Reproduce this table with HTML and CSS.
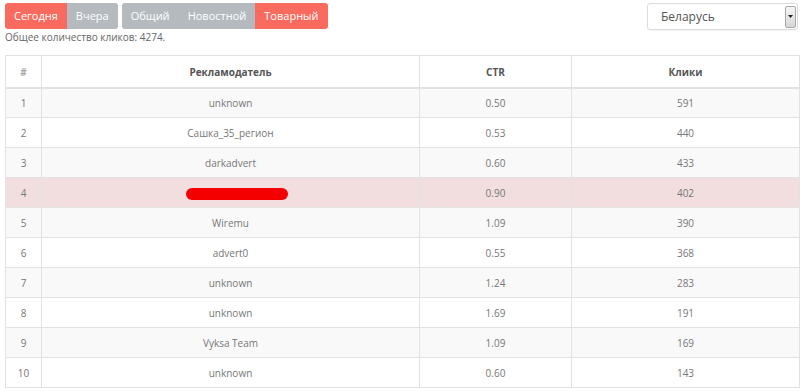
FILE: index.html
```html
<!DOCTYPE html>
<html>
<head>
<meta charset="utf-8">
<link rel="stylesheet" href="styles.css">
</head>
<body>
<div class="page">
  <div class="topbar">
    <div class="left">
      <div class="groups">
        <div class="group">
          <span class="btn active">Сегодня</span><span class="btn">Вчера</span>
        </div>
        <div class="group">
          <span class="btn">Общий</span><span class="btn">Новостной</span><span class="btn active">Товарный</span>
        </div>
      </div>
      <div class="total">Общее количество кликов: 4274.</div>
    </div>
    <div class="select">
      <span class="select-text">Беларусь</span>
      <span class="select-arrow"><svg width="5" height="3" viewBox="0 0 5 3"><path d="M0 0H5L2.5 3Z" fill="#222"/></svg></span>
    </div>
  </div>
  <table class="stats">
    <colgroup>
      <col class="c-num"><col class="c-adv"><col class="c-ctr"><col class="c-clicks">
    </colgroup>
    <thead>
      <tr><th class="hash">#</th><th>Рекламодатель</th><th>CTR</th><th>Клики</th></tr>
    </thead>
    <tbody>
      <tr><td>1</td><td>unknown</td><td>0.50</td><td>591</td></tr>
      <tr><td>2</td><td>Сашка_35_регион</td><td>0.53</td><td>440</td></tr>
      <tr><td>3</td><td>darkadvert</td><td>0.60</td><td>433</td></tr>
      <tr class="danger"><td>4</td><td><span class="redact"></span></td><td>0.90</td><td>402</td></tr>
      <tr><td>5</td><td>Wiremu</td><td>1.09</td><td>390</td></tr>
      <tr><td>6</td><td>advert0</td><td>0.55</td><td>368</td></tr>
      <tr><td>7</td><td>unknown</td><td>1.24</td><td>283</td></tr>
      <tr><td>8</td><td>unknown</td><td>1.69</td><td>191</td></tr>
      <tr><td>9</td><td>Vyksa Team</td><td>1.09</td><td>169</td></tr>
      <tr><td>10</td><td>unknown</td><td>0.60</td><td>143</td></tr>
    </tbody>
  </table>
</div>
</body>
</html>
```

FILE: styles.css
```css
* { box-sizing: border-box; }
html, body { margin: 0; padding: 0; background: #fff; }
body {
  font-family: "Open Sans", "Liberation Sans", sans-serif;
  color: #777;
}
.page { padding: 3px 8px 0 5px; }
.topbar {
  display: flex;
  justify-content: space-between;
  align-items: flex-start;
}
.groups { display: flex; gap: 4px; }
.group {
  display: flex;
  border-radius: 3px;
  overflow: hidden;
}
.btn {
  display: block;
  height: 26px;
  line-height: 26px;
  padding: 0 9px;
  font-size: 11px;
  color: #fff;
  background: #b5babf;
}
.btn.active { background: #f96b5e; }
.total {
  font-size: 10px;
  color: #666;
  margin-top: 1px;
  line-height: 15px;
}
.select {
  width: 151px;
  height: 27px;
  margin-right: 1px;
  border: 1px solid #dcdcdc;
  border-radius: 3px;
  display: flex;
  align-items: center;
  justify-content: space-between;
  padding: 0 1px 0 13px;
  box-shadow: 0 1px 1px rgba(0,0,0,0.04);
}
.select-text { font-size: 12px; color: #555; }
.select-arrow {
  width: 11px;
  height: 22px;
  border: 1px solid #a8a8a8;
  border-radius: 2px;
  background: linear-gradient(#f6f6f6, #d6d6d6);
  display: flex;
  align-items: center;
  justify-content: center;
}
.stats {
  margin-top: 10px;
  width: 794px;
  border-collapse: collapse;
  table-layout: fixed;
  border: 1px solid #e2e2e2;
  font-size: 10px;
}
.c-num { width: 36px; }
.c-adv { width: 378px; }
.c-ctr { width: 152px; }
.c-clicks { width: 228px; }
.stats th, .stats td {
  text-align: center;
  border: 1px solid #e2e2e2;
  padding: 2px 0 0;
  height: 30px;
  line-height: 15px;
  vertical-align: middle;
}
.stats th {
  height: 32px;
  font-weight: 700;
  color: #555;
  border-bottom: 2px solid #e2e2e2;
}
.stats th.hash { color: #aaa; }
.stats td { color: #777; }
.stats tbody tr:nth-child(odd) { background: #f9f9f9; }
.stats tbody tr.danger { background: #f2dede; }
.redact {
  display: inline-block;
  width: 102px;
  height: 12px;
  border-radius: 6px;
  background: #f50000;
  vertical-align: middle;
  margin-left: 12px;
}
```
